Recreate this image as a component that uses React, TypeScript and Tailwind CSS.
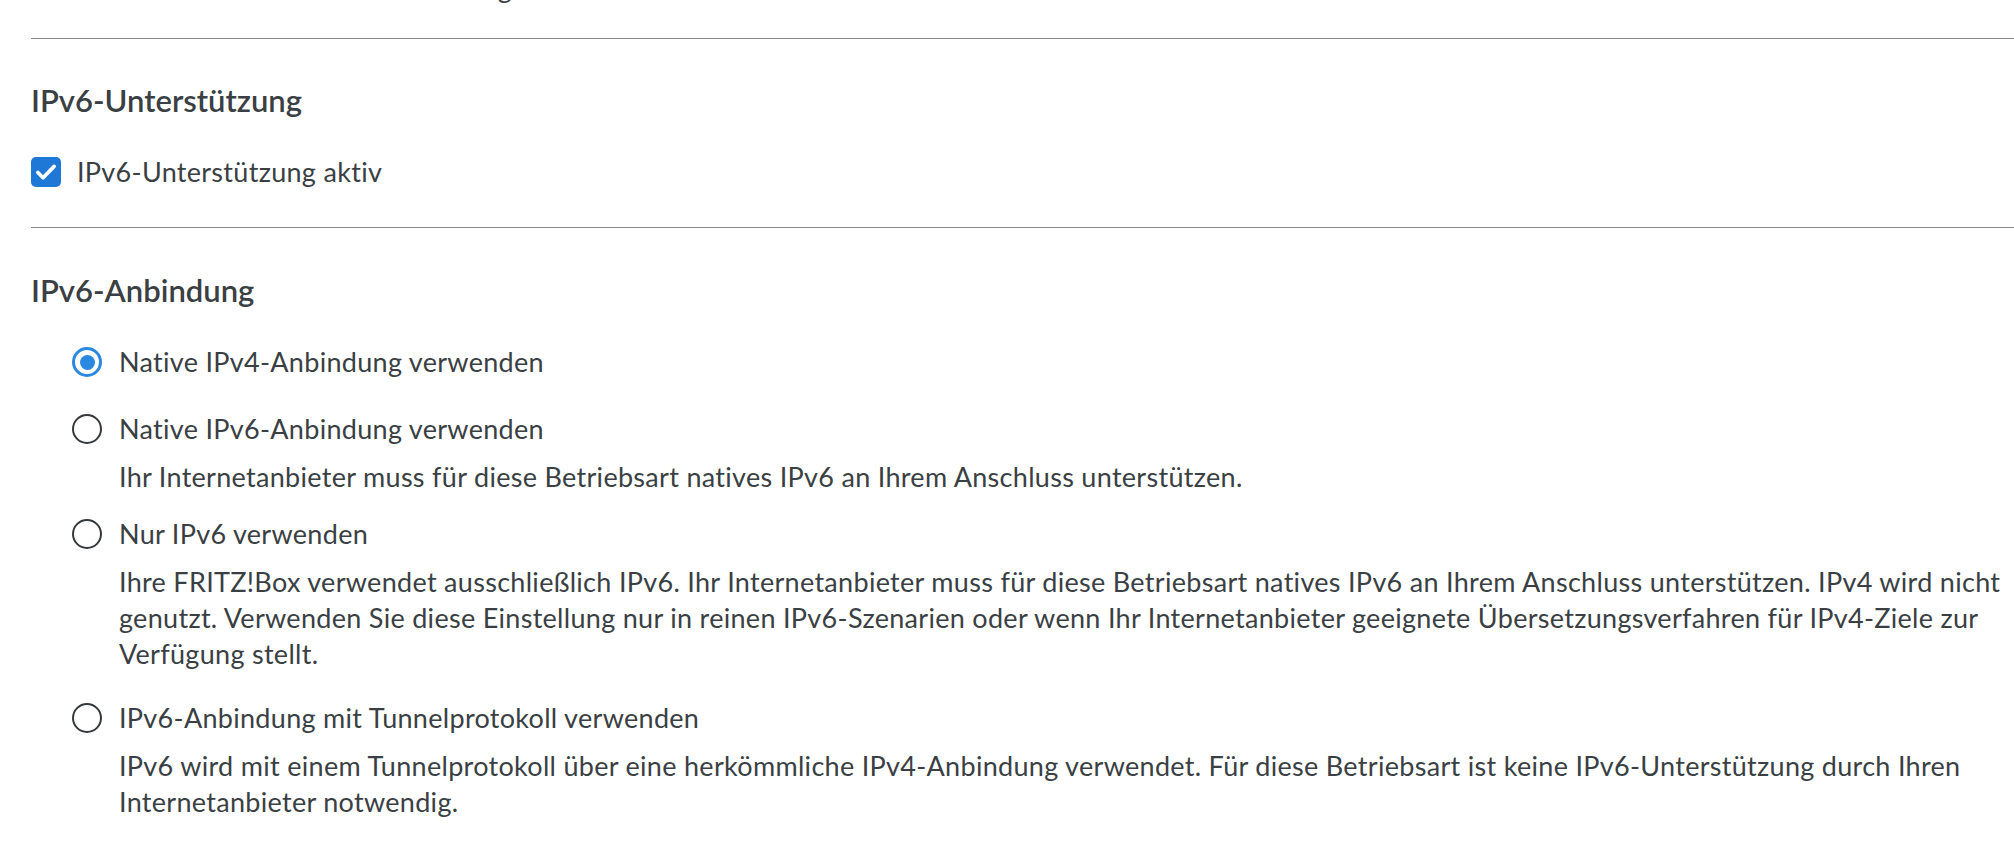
import React from "react";

const font = { fontFamily: "Lato, 'Open Sans', sans-serif" };

function Radio({ checked }: { checked?: boolean }) {
  if (checked) {
    return (
      <span className="flex h-[30px] w-[30px] shrink-0 items-center justify-center rounded-full border-[3px] border-[#2a88e0]">
        <span className="h-[15px] w-[15px] rounded-full bg-[#2a88e0]" />
      </span>
    );
  }
  return <span className="h-[30px] w-[30px] shrink-0 rounded-full border-[2.5px] border-[#35393d]" />;
}

function Option({
  checked,
  label,
  lines,
  className,
}: {
  checked?: boolean;
  label: string;
  lines?: string[];
  className?: string;
}) {
  return (
    <div className={className}>
      <div className="flex h-[36px] items-center gap-[17px] pl-[41px]">
        <Radio checked={checked} />
        <span>{label}</span>
      </div>
      {lines && (
        <div className="mt-[12px] pl-[88px]">
          {lines.map((l) => (
            <div key={l} className="whitespace-nowrap">
              {l}
            </div>
          ))}
        </div>
      )}
    </div>
  );
}

export default function App() {
  return (
    <div
      className="h-[844px] w-[2014px] overflow-hidden bg-white text-[27px] leading-[36px] tracking-[0.3px] text-[#3a3f44]"
      style={font}
    >
      <div className="-mt-[30px] pl-[68px]">
        <span>Dauerhaft aktive Internetverbindung</span>
      </div>
      <div className="mt-[32px] ml-[31px] h-px bg-[#8a8a8a]" />

      <div className="pl-[31px]">
        <h2 className="mt-[43px] text-[31px] font-semibold leading-[36px] tracking-normal">IPv6-Unterstützung</h2>
        <label className="mt-[36px] flex h-[36px] items-center gap-[16px]">
          <span className="flex h-[30px] w-[30px] items-center justify-center rounded-[5px] bg-[#1f78d6]">
            <svg width="26" height="26" viewBox="0 0 24 24" fill="none">
              <path d="M4.5 12.5l4.8 4.8L19.5 6.8" stroke="white" strokeWidth="3.4" strokeLinecap="round" strokeLinejoin="round" />
            </svg>
          </span>
          <span>IPv6-Unterstützung aktiv</span>
        </label>
      </div>

      <div className="mt-[37px] ml-[31px] h-px bg-[#8a8a8a]" />

      <div className="pl-[31px]">
        <h2 className="mt-[44px] text-[31px] font-semibold leading-[36px] tracking-normal">IPv6-Anbindung</h2>
      </div>

      <div className="pl-[31px]">
        <Option className="mt-[36px]" checked label="Native IPv4-Anbindung verwenden" />
        <Option
          className="mt-[31px]"
          label="Native IPv6-Anbindung verwenden"
          lines={["Ihr Internetanbieter muss für diese Betriebsart natives IPv6 an Ihrem Anschluss unterstützen."]}
        />
        <Option
          className="mt-[21px]"
          label="Nur IPv6 verwenden"
          lines={[
            "Ihre FRITZ!Box verwendet ausschließlich IPv6. Ihr Internetanbieter muss für diese Betriebsart natives IPv6 an Ihrem Anschluss unterstützen. IPv4 wird nicht",
            "genutzt. Verwenden Sie diese Einstellung nur in reinen IPv6-Szenarien oder wenn Ihr Internetanbieter geeignete Übersetzungsverfahren für IPv4-Ziele zur",
            "Verfügung stellt.",
          ]}
        />
        <Option
          className="mt-[28px]"
          label="IPv6-Anbindung mit Tunnelprotokoll verwenden"
          lines={[
            "IPv6 wird mit einem Tunnelprotokoll über eine herkömmliche IPv4-Anbindung verwendet. Für diese Betriebsart ist keine IPv6-Unterstützung durch Ihren",
            "Internetanbieter notwendig.",
          ]}
        />
      </div>
    </div>
  );
}
